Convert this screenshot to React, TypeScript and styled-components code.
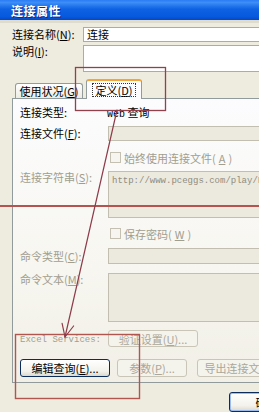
import styled, { createGlobalStyle } from 'styled-components';

const GlobalStyle = createGlobalStyle`
  html, body {
    margin: 0;
    padding: 0;
    background: #eeebdf;
  }
`;

const Page = styled.div`
  position: relative;
  width: 259px;
  height: 412px;
  overflow: hidden;
  background: #eeebdf;
  font-family: "Noto Sans CJK SC", "Noto Sans", sans-serif;
  font-size: 11px;
  color: #000;
`;

const TitleBar = styled.div`
  height: 20px;
  display: flex;
  align-items: center;
  padding-left: 11px;
  background: linear-gradient(180deg, #2a7cf2 0%, #3d8ef8 12%, #0f62e4 45%, #0658dc 85%, #0447c4 100%);
  color: #fff;
  font-size: 12px;
  font-weight: bold;
  letter-spacing: 0.5px;
  text-shadow: 1px 1px 0 #0b2a8a;
`;

const TitleEdge = styled.div`
  height: 3px;
  background: #dedcd0;
`;

const Body = styled.div`
  padding: 4px 0 0 12px;
`;

const Row = styled.div<{ $h: number; $mt?: number; $top?: boolean }>`
  display: flex;
  align-items: ${(p) => (p.$top ? 'flex-start' : 'center')};
  height: ${(p) => p.$h}px;
  margin-top: ${(p) => p.$mt ?? 0}px;
`;

const Label = styled.div<{ $w: number; $muted?: boolean }>`
  width: ${(p) => p.$w}px;
  flex-shrink: 0;
  line-height: 13px;
  white-space: nowrap;
  color: ${(p) => (p.$muted ? '#a19e90' : '#000')};
`;

const Field = styled.div<{ $h: number; $w?: number; $disabled?: boolean }>`
  box-sizing: border-box;
  width: ${(p) => p.$w ?? 200}px;
  height: ${(p) => p.$h}px;
  flex-shrink: 0;
  border: 1px solid ${(p) => (p.$disabled ? '#c2bfb1' : '#a5acb2')};
  background: ${(p) => (p.$disabled ? '#eceadf' : '#fff')};
  padding: 0 3px;
  line-height: 13px;
  white-space: nowrap;
  overflow: hidden;
`;

const Key = styled.span`
  text-decoration: underline;
`;

const TabStrip = styled.div`
  position: relative;
  z-index: 2;
  display: flex;
  align-items: flex-end;
  gap: 3px;
  height: 20px;
  margin-top: 7px;
  margin-bottom: -1px;
  padding-left: 3px;
`;

const Tab = styled.div<{ $active?: boolean }>`
  box-sizing: border-box;
  display: flex;
  align-items: center;
  justify-content: center;
  width: ${(p) => (p.$active ? 56 : 68)}px;
  height: ${(p) => (p.$active ? 20 : 15)}px;
  margin-bottom: ${(p) => (p.$active ? 0 : 1)}px;
  border: 1px solid #919b9c;
  border-bottom: none;
  border-top: ${(p) => (p.$active ? '2px solid #f3a43a' : '1px solid #919b9c')};
  border-radius: 3px 3px 0 0;
  background: ${(p) => (p.$active ? '#fcfcfe' : 'linear-gradient(180deg, #ffffff, #ecebe5)')};
  white-space: nowrap;
`;

const Focus = styled.span`
  padding: 0 2px;
  outline: 1px dotted #333;
  line-height: 12px;
`;

const Panel = styled.div`
  box-sizing: border-box;
  position: relative;
  z-index: 1;
  width: 300px;
  height: 285px;
  border: 1px solid #919b9c;
  background: linear-gradient(180deg, #fcfcfe 0%, #f7f6f0 60%, #f1efe6 100%);
  padding-left: 7px;
  display: flex;
  flex-direction: column;
`;

const Mono = styled.span`
  font-family: "Liberation Mono", "DejaVu Sans Mono", monospace;
  font-size: 10px;
`;

const MonoLabel = styled(Label)`
  font-family: "Liberation Mono", "DejaVu Sans Mono", monospace;
  font-size: 9px;
  padding-top: 4px;
`;

const AreaText = styled.div`
  padding-top: 3px;
  font-family: "Liberation Mono", "DejaVu Sans Mono", monospace;
  font-size: 9px;
  color: #8f8c7e;
`;

const CheckRow = styled.div<{ $mt: number }>`
  display: flex;
  align-items: center;
  gap: 3px;
  height: 11px;
  margin-top: ${(p) => p.$mt}px;
  margin-left: 90px;
  color: #a19e90;
  white-space: nowrap;
`;

const CheckBox = styled.span`
  box-sizing: border-box;
  width: 11px;
  height: 11px;
  border: 1px solid #c4c1b3;
  background: #f6f5ef;
  flex-shrink: 0;
`;

const Button = styled.div<{ $w: number; $disabled?: boolean; $default?: boolean }>`
  box-sizing: border-box;
  display: flex;
  align-items: center;
  justify-content: center;
  width: ${(p) => p.$w}px;
  height: 100%;
  flex-shrink: 0;
  border: 1px solid ${(p) => (p.$disabled ? '#c9c6b8' : '#0a2d5e')};
  border-radius: 3px;
  background: ${(p) =>
    p.$disabled ? '#f4f3ec' : 'linear-gradient(180deg, #ffffff 0%, #f3f2ec 70%, #dcd8cd 100%)'};
  box-shadow: ${(p) => (p.$default ? 'inset 0 0 0 1px #9dbcf0' : 'none')};
  color: ${(p) => (p.$disabled ? '#aaa79a' : '#000')};
  white-space: nowrap;
`;

const ButtonRow = styled.div`
  display: flex;
  gap: 7px;
  height: 18px;
  margin-top: 12px;
  & > :nth-child(3) {
    margin-left: 3px;
  }
`;

const Footer = styled.div`
  display: flex;
  height: 20px;
  margin-top: 9px;
  padding-left: 217px;
`;

const Overlay = styled.svg`
  position: absolute;
  left: 0;
  top: 0;
  z-index: 10;
  pointer-events: none;
`;

export default function App() {
  return (
    <Page>
      <GlobalStyle />
      <TitleBar>连接属性</TitleBar>
      <TitleEdge />
      <Body>
        <Row $h={15}>
          <Label $w={71}>
            连接名称(<Key>N</Key>):
          </Label>
          <Field $h={15} $w={190}>连接</Field>
        </Row>
        <Row $h={27} $mt={3} $top>
          <Label $w={71}>
            说明(<Key>I</Key>):
          </Label>
          <Field $h={27} $w={190} />
        </Row>

        <TabStrip>
          <Tab>
            使用状况(<Key>G</Key>)
          </Tab>
          <Tab $active>
            <Focus>
              定义(<Key>D</Key>)
            </Focus>
          </Tab>
        </TabStrip>

        <Panel>
          <Row $h={16} $mt={5}>
            <Label $w={87}>连接类型:</Label>
            <span>
              <Mono>Web</Mono> 查询
            </span>
          </Row>
          <Row $h={15} $mt={6}>
            <Label $w={88}>
              连接文件(<Key>F</Key>):
            </Label>
            <Field $h={15} $w={190} $disabled />
          </Row>
          <CheckRow $mt={11}>
            <CheckBox />
            始终使用连接文件(<Key>A</Key>)
          </CheckRow>
          <Row $h={47} $mt={8} $top>
            <Label $w={88} $muted>
              连接字符串(<Key>S</Key>):
            </Label>
            <Field $h={47} $w={190} $disabled>
              <AreaText>http://www.pceggs.com/play/F</AreaText>
            </Field>
          </Row>
          <CheckRow $mt={10}>
            <CheckBox />
            保存密码(<Key>W</Key>)
          </CheckRow>
          <Row $h={16} $mt={9}>
            <Label $w={88} $muted>
              命令类型(<Key>C</Key>):
            </Label>
            <Field $h={16} $w={190} $disabled />
          </Row>
          <Row $h={49} $mt={9} $top>
            <Label $w={88} $muted>
              命令文本(<Key>M</Key>):
            </Label>
            <Field $h={49} $w={190} $disabled />
          </Row>
          <Row $h={17} $mt={8} $top>
            <MonoLabel $w={88} $muted>
              Excel Services:
            </MonoLabel>
            <Button $w={90} $disabled>
              验证设置(<Key>U</Key>)...
            </Button>
          </Row>
          <ButtonRow>
            <Button $w={90}>
              编辑查询(<Key>E</Key>)...
            </Button>
            <Button $w={70} $disabled>
              参数(<Key>P</Key>)...
            </Button>
            <Button $w={90} $disabled>
              导出连接文件...
            </Button>
          </ButtonRow>
        </Panel>

        <Footer>
          <Button $w={75} $default>
            确定
          </Button>
        </Footer>
      </Body>

      <Overlay width={259} height={412} viewBox="0 0 259 412">
        <rect x={75.5} y={67.5} width={90} height={43} fill="none" stroke="#93404a" strokeWidth={1.3} />
        <line x1={0} y1={206} x2={259} y2={206} stroke="#b4534f" strokeWidth={2} />
        <rect x={15.5} y={334.5} width={124} height={64} fill="none" stroke="#b0564f" strokeWidth={1.4} />
        <g stroke="#8e3c4a" strokeWidth={1.2} fill="none" strokeLinecap="round">
          <line x1={117} y1={110} x2={65} y2={337} />
          <line x1={65} y1={337} x2={73.6} y2={326} />
          <line x1={65} y1={337} x2={62.1} y2={323.3} />
        </g>
      </Overlay>
    </Page>
  );
}
